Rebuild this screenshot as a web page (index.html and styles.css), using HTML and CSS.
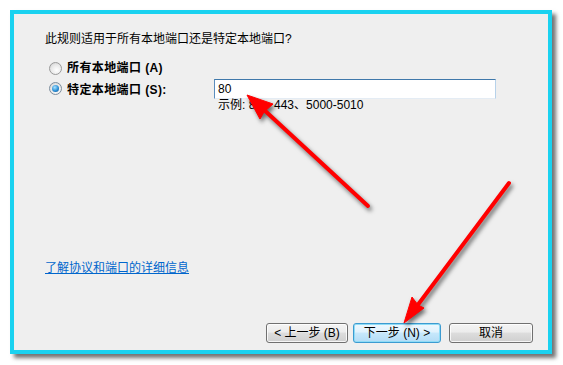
FILE: index.html
```html
<!DOCTYPE html>
<html lang="zh-CN">
<head>
<meta charset="utf-8">
<title>端口</title>
<link rel="stylesheet" href="styles.css">
</head>
<body>
<div class="frame">
  <div class="content">
    <p class="question">此规则适用于所有本地端口还是特定本地端口?</p>
    <div class="options">
      <div class="opt">
        <span class="radio"></span>
        <span class="opt-label">所有本地端口 (A)</span>
      </div>
      <div class="opt opt-specific">
        <span class="radio radio-on"></span>
        <span class="opt-label opt-label-fixed">特定本地端口 (S):</span>
        <div class="port-box">
          <div class="input">80</div>
          <div class="example">示例: 80、443、5000-5010</div>
        </div>
      </div>
    </div>
    <div class="spacer"></div>
    <a class="link" href="#">了解协议和端口的详细信息</a>
    <div class="footer">
      <button class="btn btn-back">&lt; 上一步 (B)</button>
      <button class="btn btn-next">下一步 (N) &gt;</button>
      <button class="btn btn-cancel">取消</button>
    </div>
  </div>
</div>
<svg class="arrows" width="563" height="365" viewBox="0 0 563 365">
  <g class="arrow">
    <line x1="368" y1="206" x2="262" y2="108" />
    <polygon points="247,95 273,104 264,112 260,119" />
  </g>
  <g class="arrow">
    <line x1="509" y1="183" x2="417" y2="306" />
    <polygon points="404,323 412,297 418,305 424,308" />
  </g>
</svg>
</body>
</html>
```
FILE: styles.css
```css
html, body {
  margin: 0;
  padding: 0;
  background: #ffffff;
}
body {
  width: 563px;
  height: 365px;
  position: relative;
  overflow: hidden;
  font-family: "Liberation Sans", "Noto Sans CJK SC", sans-serif;
  font-size: 12px;
  color: #000;
}
.frame {
  margin: 10px 0 0 10px;
  width: 542px;
  height: 344px;
  box-sizing: border-box;
  border: 4px solid #1ad2f0;
  background: #efefef;
  box-shadow: 4px 4px 4px rgba(0, 0, 0, 0.55);
  padding: 17px 15px 7px 31px;
}
.content {
  display: flex;
  flex-direction: column;
  height: 100%;
}
.question {
  margin: 0;
  line-height: 16px;
}
.options {
  margin-top: 13px;
  margin-left: 4px;
  display: flex;
  flex-direction: column;
  gap: 4px;
}
.opt {
  display: flex;
  align-items: center;
  height: 16px;
}
.opt-specific {
  align-items: flex-start;
  height: auto;
}
.opt-specific .radio,
.opt-specific .opt-label {
  margin-top: 2px;
}
.radio {
  width: 11px;
  height: 11px;
  border-radius: 50%;
  border: 1px solid #9a9a9a;
  background: radial-gradient(circle at 60% 65%, #ffffff 0%, #e8e8e8 55%, #c9c9c9 100%);
  flex: none;
  position: relative;
}
.radio-on {
  border-color: #7d8e9e;
}
.radio-on::after {
  content: "";
  position: absolute;
  left: 2px;
  top: 2px;
  width: 7px;
  height: 7px;
  border-radius: 50%;
  background: radial-gradient(circle at 40% 35%, #a9e3ff 0%, #2b8fd6 55%, #124d87 100%);
}
.opt-label {
  margin-left: 5px;
  font-weight: bold;
  line-height: 16px;
  letter-spacing: 0.4px;
}
.opt-label-fixed {
  width: 147px;
}
.port-box {
  display: flex;
  flex-direction: column;
  margin-top: -1px;
}
.input {
  width: 282px;
  height: 20px;
  box-sizing: border-box;
  background: #fff;
  border: 1px solid;
  border-color: #3f78aa #b7d2ea #e4ecf4 #5b8dbd;
  padding: 0 3px;
  line-height: 18px;
  font-size: 12px;
}
.example {
  margin-left: 4px;
  line-height: 13px;
  margin-top: 0;
}
.spacer {
  flex: 1;
}
.link {
  color: #0066cc;
  text-decoration: underline;
  line-height: 16px;
  align-self: flex-start;
}
.footer {
  margin-top: 47px;
  display: flex;
  justify-content: flex-end;
  gap: 5px;
}
.btn {
  height: 20px;
  box-sizing: border-box;
  border: 1px solid #707070;
  border-radius: 3px;
  background: linear-gradient(#f4f4f4 0%, #ececec 45%, #dddddd 50%, #cfcfcf 100%);
  font-family: "Liberation Sans", "Noto Sans CJK SC", sans-serif;
  font-size: 12px;
  color: #000;
  padding: 0;
  line-height: 18px;
  box-shadow: inset 0 0 0 1px rgba(255, 255, 255, 0.8);
}
.btn-back {
  width: 82px;
}
.btn-next {
  width: 88px;
  border-color: #3c9bd1;
  background: linear-gradient(#eef8fe 0%, #e0f2fd 45%, #c7e8fb 50%, #b3dcf6 100%);
  box-shadow: inset 0 0 0 1px #8fdcf6;
}
.btn-cancel {
  width: 84px;
  margin-left: 3px;
}
.arrows {
  position: absolute;
  left: 0;
  top: 0;
  pointer-events: none;
  filter: drop-shadow(2px 3px 2px rgba(0, 0, 0, 0.55));
}
.arrow line {
  stroke: #ff0000;
  stroke-width: 4;
  stroke-linecap: round;
}
.arrow polygon {
  fill: #ff0000;
  stroke: #ff0000;
  stroke-width: 1;
  stroke-linejoin: round;
}
```
